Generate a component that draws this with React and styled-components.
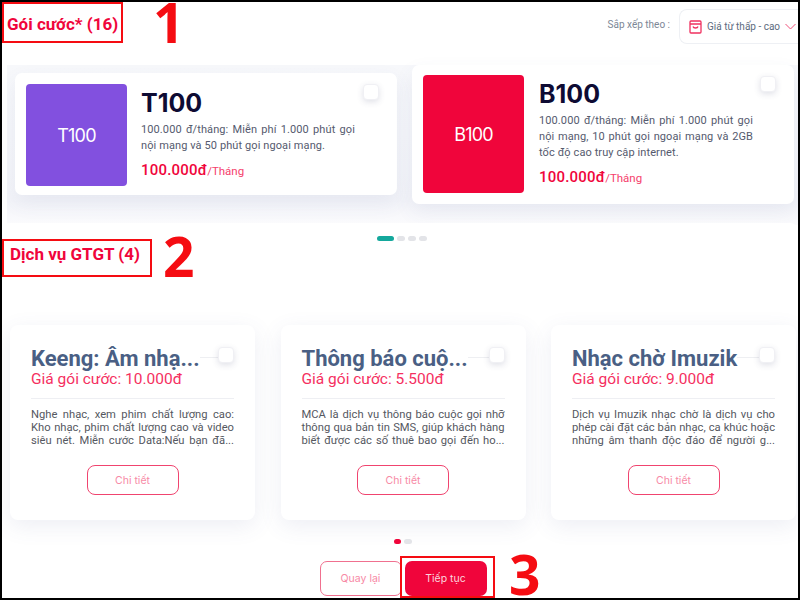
import React from "react";
import styled, { createGlobalStyle } from "styled-components";

const Global = createGlobalStyle`
  html, body { margin: 0; padding: 0; background: #fff; overflow: hidden; }
  * { box-sizing: border-box; }
`;
const Frame = styled.div`
  position: relative; width: 800px; height: 600px;
  border: 2px solid #000; background: #fff; font-family: Roboto, sans-serif;
  display: flex; flex-direction: column;
`;
const Header = styled.header`
  height: 63px; display: flex; justify-content: flex-end; align-items: flex-start;
  padding-top: 7px; flex: none;
`;
const SortLabel = styled.span`
  font-size: 10px; color: #7d8796; margin-top: 10px; margin-right: 9px;
`;
const SortBox = styled.div`
  width: 119px; height: 35px; border: 1px solid #eef0f4; border-right: none;
  border-radius: 8px 0 0 8px; display: flex; align-items: center; padding-left: 9px; gap: 5px;
  font-size: 10px; color: #5d6b80; white-space: nowrap;
`;
const Band = styled.section`
  flex: none; height: 160px; margin-left: 5px; background: linear-gradient(#f7f8fb, #f3f4f9 85%, #fbfbfd);
  display: flex; align-items: flex-start; gap: 15px; padding-left: 8px;
`;
const PlanCard = styled.article`
  position: relative; width: 382px; height: ${p => p.$tall ? 139 : 122}px; margin-top: ${p => p.$tall ? 0 : 8}px;
  background: #fff; border-radius: 7px; display: flex; gap: ${p => p.$tall ? 15 : 14}px; padding: ${p => p.$tall ? 10 : 11}px 11px 0;
  box-shadow: 0 8px 20px rgba(80, 90, 140, .08); flex: none;
`;
const PlanThumb = styled.div`
  width: 101px; height: ${p => p.$tall ? 118 : 102}px; border-radius: 4px; background: ${p => p.$bg}; color: #fff; flex: none;
  display: flex; align-items: center; justify-content: center;
  font: 400 18px Inter, sans-serif; letter-spacing: -.8px;
`;
const PlanBody = styled.div` width: 214px; `;
const PlanName = styled.h3`
  margin: 4px 0 0; font: 700 25px/30px Inter, sans-serif; color: #0e0b33;
`;
const PlanText = styled.p`
  margin: 4px 0 0; font-size: 11px; line-height: 16px; color: #555a6e; text-align: justify; letter-spacing: .1px;
`;
const PlanPrice = styled.div`
  margin-top: 6px; font: 500 15px/20px Roboto, sans-serif; color: #f0053b; letter-spacing: .2px;
  small { font-size: 11.5px; font-weight: 400; color: #f5406c; letter-spacing: 0; }
`;
const Check = styled.span`
  position: absolute; top: ${p => p.$top}px; right: ${p => p.$right}px; width: 16px; height: 16px;
  border-radius: 4px; background: #fff; border: 1px solid #f0f0f4;
  box-shadow: 0 2px 6px rgba(60, 70, 110, .16);
`;
const Section = styled.section`
  flex: 1; min-height: 0; background: #fff; margin-top: -2px; position: relative;
  border-radius: 8px 8px 0 0; display: flex; flex-direction: column; align-items: center;
`;
const Dots = styled.div`
  display: flex; gap: 3px; margin-top: ${p => p.$mt}px; height: 5px; flex: none; transform: translateX(${p => p.$x}px);
`;
const Dot = styled.i`
  display: block; width: ${p => p.$wide ? 17 : p.$w || 8}px; height: 5px; border-radius: 3px; background: ${p => p.$c || "#e3e4e8"};
`;
const ServiceRow = styled.div`
  margin-top: 84px; width: 100%; padding-left: 8px; display: flex; gap: 25.5px; flex: none;
`;
const ServiceCard = styled.article`
  position: relative; width: 245px; height: 195px; background: #fff; border-radius: 8px; padding: 22px 21px 0;
  box-shadow: 0 6px 22px rgba(80, 90, 150, .1); flex: none;
`;
const TitleRow = styled.div`
  position: relative;
  &::before { content: ""; position: absolute; left: 0; right: 0; top: 10px; height: 1px; background: #eeeff2; }
`;
const ServiceTitle = styled.h3`
  position: relative; margin: 0; width: fit-content; font: 700 22px/23px Roboto, sans-serif; color: #4a5f84;
  white-space: nowrap; background: #fff;
`;
const ServicePrice = styled.div`
  font-size: 15.5px; line-height: 19px; color: #f5305f;
`;
const Divider = styled.hr`
  border: 0; height: 1px; background: #eeeff3; margin: 9px 0 9px;
`;
const ServiceText = styled.p`
  margin: 0; font-size: 11.2px; line-height: 13px; color: #55585f;
`;
const TextLine = styled.span`
  display: block; text-align: justify; text-align-last: justify;
`;
const DetailButton = styled.button`
  display: block; width: 92px; height: 30px; margin: 18px auto 0; background: #fff; border: 1.3px solid #f0446f;
  border-radius: 8px; color: #f78aa6; font: 400 10.5px Inter, sans-serif;
`;
const Actions = styled.div`
  display: flex; gap: 3px; margin-top: 17px; transform: translateX(3px); flex: none;
`;
const BackButton = styled.button`
  width: 82px; height: 35px; background: #fff; border: 1.3px solid #f0708f; border-radius: 7px; color: #f78aa6;
  font: 400 10.5px Inter, sans-serif;
`;
const NextButton = styled.button`
  width: 82px; height: 35px; background: #f0053b; border: 0; border-radius: 7px; color: #fbd5de;
  font: 400 10.5px Inter, sans-serif;
`;
const Mark = styled.div`
  position: absolute; left: ${p => p.$x}px; top: ${p => p.$y}px; width: ${p => p.$w}px; height: ${p => p.$h}px; border: 2.5px solid #f50c12;
  pointer-events: none;
`;
const SectionLabel = styled.span`
  position: absolute; left: ${p => p.$l}px; top: ${p => p.$t}px; font: 700 17px/20px Roboto, sans-serif; color: #f0053b; white-space: nowrap;
`;
const Numeral = styled.span`
  position: absolute; left: ${p => p.$x}px; top: ${p => p.$y}px; font: 700 55px/40px "Open Sans", sans-serif; color: #f50c12;
`;

const services = [
  ["Keeng: Âm nhạ...", "Giá gói cước: 10.000đ", ["Nghe nhạc, xem phim chất lượng cao:", "Kho nhạc, phim chất lượng cao và video", "siêu nét. Miễn cước Data:Nếu bạn đã..."]],
  ["Thông báo cuộ...", "Giá gói cước: 5.500đ", ["MCA là dịch vụ thông báo cuộc gọi nhỡ", "thông qua bản tin SMS, giúp khách hàng", "biết được các số thuê bao gọi đến ho..."]],
  ["Nhạc chờ Imuzik", "Giá gói cước: 9.000đ", ["Dịch vụ Imuzik nhạc chờ là dịch vụ cho", "phép cài đặt các bản nhạc, ca khúc hoặc", "những âm thanh độc đáo để người g..."]],
];

export default function App() {
  return (
    <Frame>
      <Global />
      <Header>
        <SortLabel>Sắp xếp theo :</SortLabel>
        <SortBox>
          <svg width="13" height="14" viewBox="0 0 13 14" fill="none" stroke="#f0305f" strokeWidth="1.3">
            <rect x="1" y="1" width="11" height="12" rx="1" />
            <path d="M1 4h11M4 6.500c.5 2 4.500 2 5 0" />
          </svg>
          <span>Giá từ thấp - cao</span>
          <svg width="11" height="7" viewBox="0 0 11 7" fill="none" stroke="#f0507a" strokeWidth="1">
            <path d="M.5 1l5 5 5-5" />
          </svg>
        </SortBox>
      </Header>
      <Band>
        <PlanCard>
          <PlanThumb $bg="#8250df">T100</PlanThumb>
          <PlanBody>
            <PlanName>T100</PlanName>
            <PlanText>100.000 đ/tháng: Miễn phí 1.000 phút gọi nội mạng và 50 phút gọi ngoại mạng.</PlanText>
            <PlanPrice>100.000đ<small>/Tháng</small></PlanPrice>
          </PlanBody>
          <Check $top={11} $right={18} />
        </PlanCard>
        <PlanCard $tall>
          <PlanThumb $tall $bg="#f0053b">B100</PlanThumb>
          <PlanBody>
            <PlanName>B100</PlanName>
            <PlanText>100.000 đ/tháng: Miễn phí 1.000 phút gọi nội mạng, 10 phút gọi ngoại mạng và 2GB tốc độ cao truy cập internet.</PlanText>
            <PlanPrice>100.000đ<small>/Tháng</small></PlanPrice>
          </PlanBody>
          <Check $top={11} $right={18} />
        </PlanCard>
      </Band>
      <Section>
        <Dots $mt={13} $x={2}>
          <Dot $wide $c="#14a89c" /><Dot /><Dot /><Dot />
        </Dots>
        <ServiceRow>
          {services.map(s => (
            <ServiceCard key={s[0]}>
              <TitleRow><ServiceTitle>{s[0]}</ServiceTitle></TitleRow>
              <ServicePrice>{s[1]}</ServicePrice>
              <Divider />
              <ServiceText>
                {s[2].map(l => <TextLine key={l}>{l}</TextLine>)}
              </ServiceText>
              <DetailButton>Chi tiết</DetailButton>
              <Check $top={22} $right={21} />
            </ServiceCard>
          ))}
        </ServiceRow>
        <Dots $mt={19} $x={3}>
          <Dot $c="#f0053b" $w={7} /><Dot $w={8} />
        </Dots>
        <Actions>
          <BackButton>Quay lại</BackButton>
          <NextButton>Tiếp tục</NextButton>
        </Actions>
      </Section>
      <SectionLabel $l={5} $t={12}>Gói cước* (16)</SectionLabel>
      <SectionLabel $l={8} $t={242}>Dịch vụ GTGT (4)</SectionLabel>
      <Mark $x={0} $y={0} $w={121} $h={41} />
      <Mark $x={0} $y={237} $w={150} $h={38} />
      <Mark $x={398} $y={554} $w={95} $h={42} />
      <Numeral $x={151} $y={0}>1</Numeral>
      <Numeral $x={161} $y={234}>2</Numeral>
      <Numeral $x={507} $y={552}>3</Numeral>
    </Frame>
  );
}
